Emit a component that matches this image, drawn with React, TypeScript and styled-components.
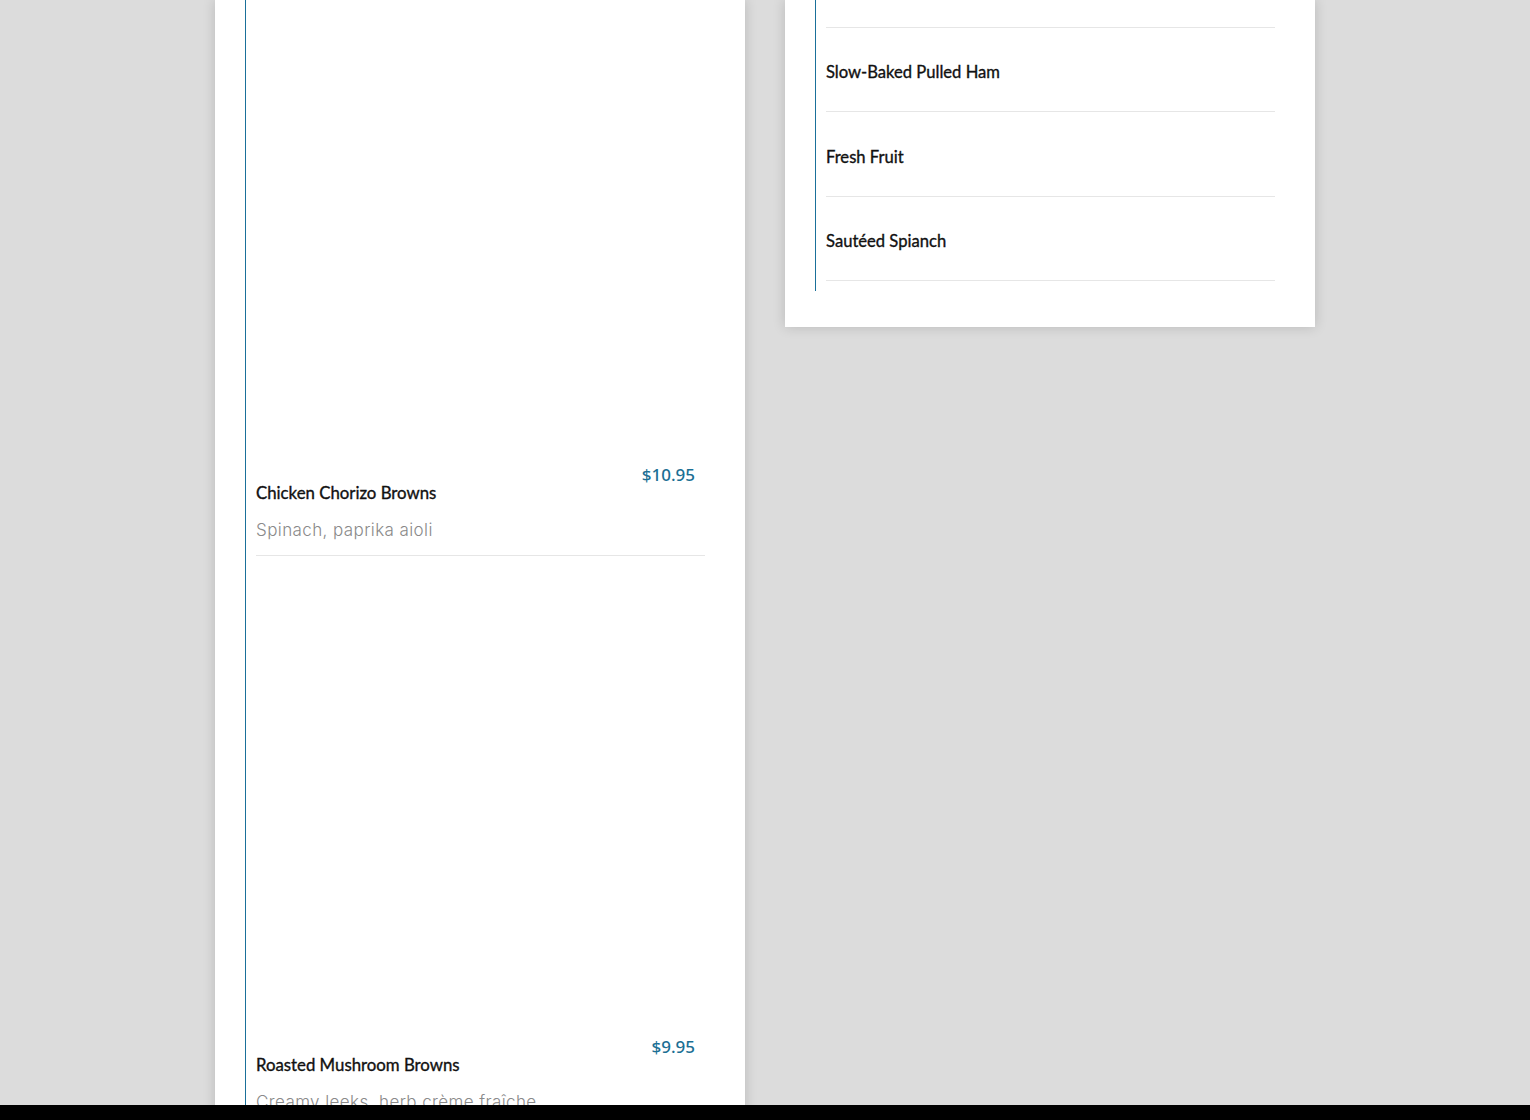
import React from "react";
import styled, { createGlobalStyle } from "styled-components";

const Global = createGlobalStyle`
  html, body { margin: 0; padding: 0; }
  body {
    background: #dcdcdc;
    overflow: hidden;
    height: 1120px;
  }
`;

const Page = styled.div`
  display: flex;
  justify-content: center;
  align-items: flex-start;
  gap: 40px;
  height: 1120px;
  overflow: hidden;
`;

const Card = styled.section<{ $fill?: boolean }>`
  width: 530px;
  box-sizing: border-box;
  background: #ffffff;
  box-shadow: 0 0 12px rgba(0, 0, 0, 0.16);
  padding: 0 30px ${(p) => (p.$fill ? "0" : "36px")};
  ${(p) => (p.$fill ? "min-height: 1120px;" : "")}
`;

const Rail = styled.div<{ $fill?: boolean }>`
  border-left: 1px solid #1a709a;
  padding: 0 10px 10px 10px;
  ${(p) => (p.$fill ? "min-height: 1120px; box-sizing: border-box;" : "")}
`;

const Item = styled.article`
  border-bottom: 1px solid #e6e6e6;
  padding-bottom: 12px;
`;

const Picture = styled.div<{ $h: number }>`
  height: ${(p) => p.$h}px;
  background: #ffffff;
`;

const Head = styled.div`
  display: flex;
  justify-content: space-between;
  align-items: flex-start;
  padding-right: 10px;
`;

const Title = styled.h3`
  margin: 18px 0 0;
  font-family: "Lato", "Liberation Sans", sans-serif;
  font-weight: 400;
  font-size: 16.8px;
  line-height: 24px;
  color: #111111;
  -webkit-text-stroke: 0.35px #111111;
`;

const Price = styled.span`
  font-family: "Noto Sans", "Liberation Sans", sans-serif;
  font-weight: 500;
  font-size: 17px;
  line-height: 24px;
  color: #1b6f94;
`;

const Desc = styled.p`
  margin: 12px 0 0;
  font-family: "Inter", "Liberation Sans", sans-serif;
  font-weight: 300;
  font-size: 17px;
  letter-spacing: 0.4px;
  line-height: 26px;
  color: #8a8a8a;
`;

const Row = styled.div<{ $h: number }>`
  height: ${(p) => p.$h}px;
  box-sizing: border-box;
  display: flex;
  align-items: center;
  padding-top: 5px;
  border-bottom: 1px solid #e6e6e6;
  font-family: "Lato", "Liberation Sans", sans-serif;
  font-weight: 400;
  font-size: 16.6px;
  color: #111111;
  -webkit-text-stroke: 0.35px #111111;
`;

const BottomBar = styled.div`
  position: fixed;
  left: 0;
  right: 0;
  bottom: 0;
  height: 15px;
  background: #000000;
`;

const dishes = [
  { img: 463, name: "Chicken Chorizo Browns", price: "$10.95", desc: "Spinach, paprika aioli" },
  { img: 479, name: "Roasted Mushroom Browns", price: "$9.95", desc: "Creamy leeks, herb crème fraîche" },
];

const sides = [
  { name: "Slow-Baked Pulled Ham", h: 84 },
  { name: "Fresh Fruit", h: 85 },
  { name: "Sautéed Spianch", h: 84 },
];

export default function App() {
  return (
    <>
      <Global />
      <Page>
        <Card $fill>
          <Rail $fill>
            {dishes.map((d) => (
              <Item key={d.name}>
                <Picture $h={d.img} />
                <Head>
                  <Title>{d.name}</Title>
                  <Price>{d.price}</Price>
                </Head>
                <Desc>{d.desc}</Desc>
              </Item>
            ))}
          </Rail>
        </Card>
        <Card>
          <Rail>
            <Row $h={28} />
            {sides.map((s) => (
              <Row key={s.name} $h={s.h}>
                {s.name}
              </Row>
            ))}
          </Rail>
        </Card>
      </Page>
      <BottomBar />
    </>
  );
}
